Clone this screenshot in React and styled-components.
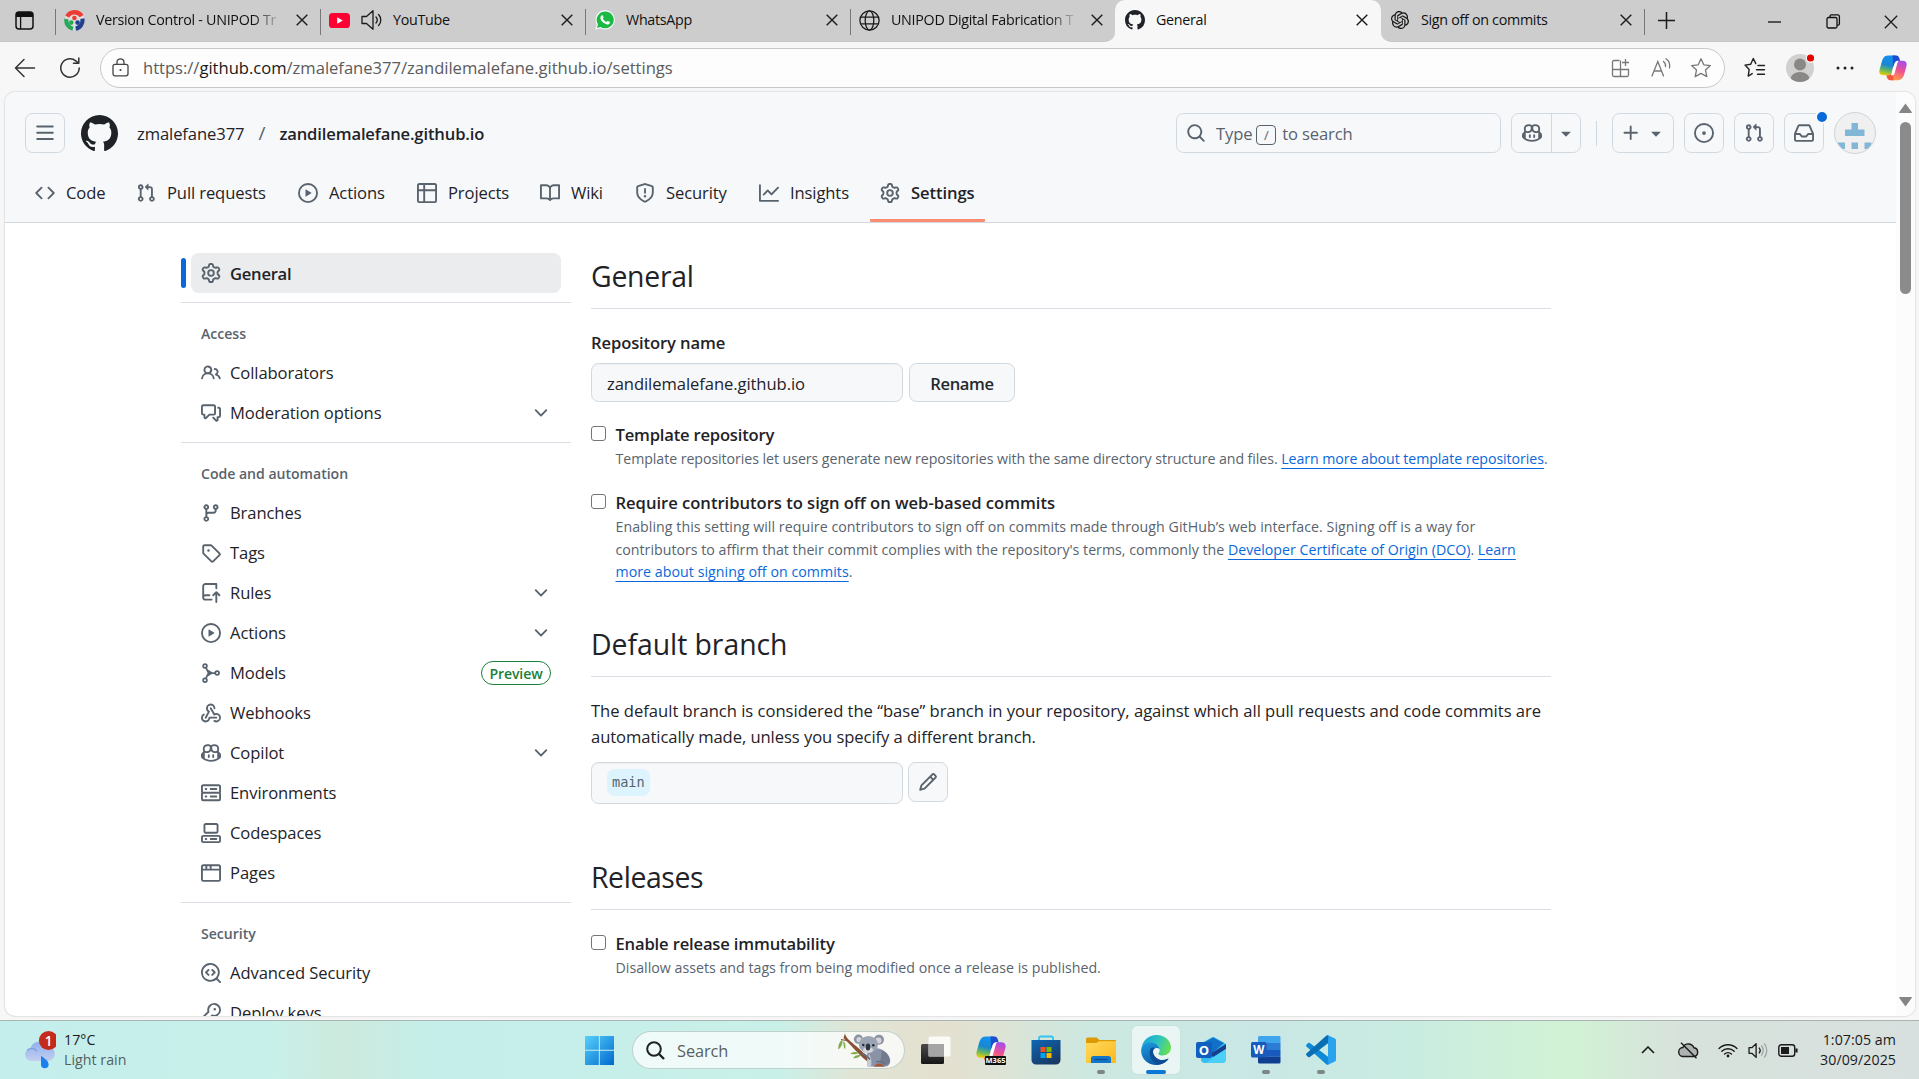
import React from 'react';
import styled, { createGlobalStyle, css } from 'styled-components';

const Global = createGlobalStyle`
  *, *::before, *::after { box-sizing: border-box; }
  html, body { margin: 0; height: 1079px; overflow: hidden; }
  body {
    font-family: "Open Sans", "Noto Sans", sans-serif;
    color: #1f2328;
    background: #f7f7f7;
  }
  svg { display: block; flex: none; }
`;

/* ---------- Octicon glyphs on a 16px grid ---------- */
const PATHS = {
  mark: 'M8 0c4.42 0 8 3.58 8 8a8.013 8.013 0 0 1-5.45 7.59c-.4.08-.55-.17-.55-.38 0-.27.01-1.13.01-2.2 0-.75-.25-1.23-.54-1.48 1.78-.2 3.65-.88 3.65-3.95 0-.88-.31-1.59-.82-2.15.08-.2.36-1.02-.08-2.12 0 0-.67-.22-2.2.82-.64-.18-1.32-.27-2-.27-.68 0-1.36.09-2 .27-1.53-1.03-2.2-.82-2.2-.82-.44 1.1-.16 1.92-.08 2.12-.51.56-.82 1.28-.82 2.15 0 3.06 1.86 3.75 3.64 3.95-.23.2-.44.55-.51 1.07-.46.21-1.61.55-2.33-.66-.15-.24-.6-.83-1.23-.82-.67.01-.27.38.01.53.34.19.73.9.82 1.13.16.45.68 1.31 2.69.94 0 .67.01 1.3.01 1.49 0 .21-.15.45-.55.38A7.995 7.995 0 0 1 0 8c0-4.42 3.58-8 8-8Z',
  bars: 'M1 2.75A.75.75 0 0 1 1.75 2h12.5a.75.75 0 0 1 0 1.5H1.75A.75.75 0 0 1 1 2.75Zm0 5A.75.75 0 0 1 1.75 7h12.5a.75.75 0 0 1 0 1.5H1.75A.75.75 0 0 1 1 7.75ZM1.75 12h12.5a.75.75 0 0 1 0 1.5H1.75a.75.75 0 0 1 0-1.5Z',
  code: 'm11.28 3.22 4.25 4.25a.75.75 0 0 1 0 1.06l-4.25 4.25a.749.749 0 0 1-1.275-.326.749.749 0 0 1 .215-.734L13.94 8l-3.72-3.72a.749.749 0 0 1 .326-1.275.749.749 0 0 1 .734.215Zm-6.56 0a.751.751 0 0 1 1.042.018.751.751 0 0 1 .018 1.042L2.06 8l3.72 3.72a.749.749 0 0 1-.326 1.275.749.749 0 0 1-.734-.215L.47 8.53a.75.75 0 0 1 0-1.06Z',
  pull: 'M1.5 3.25a2.25 2.25 0 1 1 3 2.122v5.256a2.251 2.251 0 1 1-1.5 0V5.372A2.25 2.25 0 0 1 1.5 3.25Zm5.677-.177L9.573.677A.25.25 0 0 1 10 .854V2.5h1A2.5 2.5 0 0 1 13.5 5v5.628a2.251 2.251 0 1 1-1.5 0V5a1 1 0 0 0-1-1h-1v1.646a.25.25 0 0 1-.427.177L7.177 3.427a.25.25 0 0 1 0-.354ZM3.75 2.5a.75.75 0 1 0 0 1.5.75.75 0 0 0 0-1.5Zm0 9.5a.75.75 0 1 0 0 1.5.75.75 0 0 0 0-1.5Zm8.25.75a.75.75 0 1 0 1.5 0 .75.75 0 0 0-1.5 0Z',
  play: 'M8 0a8 8 0 1 1 0 16A8 8 0 0 1 8 0ZM1.5 8a6.5 6.5 0 1 0 13 0 6.5 6.5 0 0 0-13 0Zm4.879-2.773 4.264 2.559a.25.25 0 0 1 0 .428l-4.264 2.559A.25.25 0 0 1 6 10.559V5.442a.25.25 0 0 1 .379-.215Z',
  table: 'M0 1.75C0 .784.784 0 1.75 0h12.5C15.216 0 16 .784 16 1.75v12.5A1.75 1.75 0 0 1 14.25 16H1.75A1.75 1.75 0 0 1 0 14.25ZM6.5 6.5v8h7.75a.25.25 0 0 0 .25-.25V6.5Zm8-1.5V1.75a.25.25 0 0 0-.25-.25H6.5V5Zm-13 1.5v7.75c0 .138.112.25.25.25H5v-8ZM5 5V1.5H1.75a.25.25 0 0 0-.25.25V5Z',
  book: 'M0 1.75A.75.75 0 0 1 .75 1h4.253c1.227 0 2.317.59 3 1.501A3.743 3.743 0 0 1 11.006 1h4.245a.75.75 0 0 1 .75.75v10.5a.75.75 0 0 1-.75.75h-4.507a2.25 2.25 0 0 0-1.591.659l-.622.621a.75.75 0 0 1-1.06 0l-.622-.621A2.25 2.25 0 0 0 5.258 13H.75a.75.75 0 0 1-.75-.75Zm7.251 10.324.004-5.073-.002-2.253A2.25 2.25 0 0 0 5.003 2.5H1.5v9h3.757a3.75 3.75 0 0 1 1.994.574ZM8.755 4.75l-.004 7.322a3.752 3.752 0 0 1 1.992-.572H14.5v-9h-3.495a2.25 2.25 0 0 0-2.25 2.25Z',
  shield: 'M7.467.133a1.748 1.748 0 0 1 1.066 0l5.25 1.68A1.75 1.75 0 0 1 15 3.48V7c0 1.566-.32 3.182-1.303 4.682-.983 1.498-2.585 2.813-5.032 3.855a1.697 1.697 0 0 1-1.33 0c-2.447-1.042-4.049-2.357-5.032-3.855C1.32 10.182 1 8.566 1 7V3.48a1.75 1.75 0 0 1 1.217-1.667Zm.61 1.429a.25.25 0 0 0-.153 0l-5.25 1.68a.25.25 0 0 0-.174.238V7c0 1.358.275 2.666 1.057 3.86.784 1.194 2.121 2.34 4.366 3.297a.196.196 0 0 0 .154 0c2.245-.956 3.582-2.104 4.366-3.298C13.225 9.666 13.5 8.36 13.5 7V3.48a.251.251 0 0 0-.174-.237l-5.25-1.68ZM8.75 4.75v3a.75.75 0 0 1-1.5 0v-3a.75.75 0 0 1 1.5 0ZM9 10.5a1 1 0 1 1-2 0 1 1 0 0 1 2 0Z',
  graph: 'M1.5 1.75V13.5h13.75a.75.75 0 0 1 0 1.5H.75a.75.75 0 0 1-.75-.75V1.75a.75.75 0 0 1 1.5 0Zm14.28 2.53-5.25 5.25a.75.75 0 0 1-1.06 0L7 7.06 4.28 9.78a.751.751 0 0 1-1.042-.018.751.751 0 0 1-.018-1.042l3.25-3.25a.75.75 0 0 1 1.06 0L10 7.94l4.72-4.72a.751.751 0 0 1 1.042.018.751.751 0 0 1 .018 1.042Z',
  gear: 'M8 0a8.2 8.2 0 0 1 .701.031C9.444.095 9.99.645 10.16 1.29l.288 1.107c.018.066.079.158.212.224.231.114.454.243.668.386.123.082.233.09.299.071l1.103-.303c.644-.176 1.392.021 1.82.63.27.385.506.792.704 1.218.315.675.111 1.422-.364 1.891l-.814.806c-.049.048-.098.147-.088.294.016.257.016.515 0 .772-.01.147.038.246.088.294l.814.806c.475.469.679 1.216.364 1.891a7.977 7.977 0 0 1-.704 1.217c-.428.61-1.176.807-1.82.63l-1.102-.302c-.067-.019-.177-.011-.3.071a5.909 5.909 0 0 1-.668.386c-.133.066-.194.158-.211.224l-.29 1.106c-.168.646-.715 1.196-1.458 1.26a8.006 8.006 0 0 1-1.402 0c-.743-.064-1.289-.614-1.458-1.26l-.289-1.106c-.018-.066-.079-.158-.212-.224a5.738 5.738 0 0 1-.668-.386c-.123-.082-.233-.09-.299-.071l-1.103.303c-.644.176-1.392-.021-1.82-.63a8.12 8.12 0 0 1-.704-1.218c-.315-.675-.111-1.422.363-1.891l.815-.806c.05-.048.098-.147.088-.294a6.214 6.214 0 0 1 0-.772c.01-.147-.038-.246-.088-.294l-.815-.806C.635 6.045.431 5.298.746 4.623a7.92 7.92 0 0 1 .704-1.217c.428-.61 1.176-.807 1.82-.63l1.102.302c.067.019.177.011.3-.071.214-.143.437-.272.668-.386.133-.066.194-.158.211-.224l.29-1.106C6.009.645 6.556.095 7.299.03 7.53.01 7.764 0 8 0Zm-.571 1.525c-.036.003-.108.036-.137.146l-.289 1.105c-.147.561-.549.967-.998 1.189-.173.086-.34.183-.5.29-.417.278-.97.423-1.529.27l-1.103-.303c-.109-.03-.175.016-.195.045-.22.312-.412.644-.573.99-.014.031-.021.11.059.19l.815.806c.411.406.562.957.53 1.456a4.709 4.709 0 0 0 0 .582c.032.499-.119 1.05-.53 1.456l-.815.806c-.081.08-.073.159-.059.19.162.346.353.677.573.989.02.03.085.076.195.046l1.102-.303c.56-.153 1.113-.008 1.53.27.161.107.328.204.501.29.447.222.85.629.997 1.189l.289 1.105c.029.109.101.143.137.146a6.6 6.6 0 0 0 1.142 0c.036-.003.108-.036.137-.146l.289-1.105c.147-.561.549-.967.998-1.189.173-.086.34-.183.5-.29.417-.278.97-.423 1.529-.27l1.103.303c.109.029.175-.016.195-.045.22-.313.411-.644.573-.99.014-.031.021-.11-.059-.19l-.815-.806c-.411-.406-.562-.957-.53-1.456a4.709 4.709 0 0 0 0-.582c-.032-.499.119-1.05.53-1.456l.815-.806c.081-.08.073-.159.059-.19a6.464 6.464 0 0 0-.573-.989c-.02-.03-.085-.076-.195-.046l-1.102.303c-.56.153-1.113.008-1.53-.27a4.44 4.44 0 0 0-.501-.29c-.447-.222-.85-.629-.997-1.189l-.289-1.105c-.029-.11-.101-.143-.137-.146a6.6 6.6 0 0 0-1.142 0ZM11 8a3 3 0 1 1-6 0 3 3 0 0 1 6 0ZM9.5 8a1.5 1.5 0 1 0-3.001.001A1.5 1.5 0 0 0 9.5 8Z',
  people: 'M2 5.5a3.5 3.5 0 1 1 5.898 2.549 5.508 5.508 0 0 1 3.034 4.084.75.75 0 1 1-1.482.235 4 4 0 0 0-7.9 0 .75.75 0 0 1-1.482-.236A5.507 5.507 0 0 1 3.102 8.05 3.493 3.493 0 0 1 2 5.5ZM11 4a3.001 3.001 0 0 1 2.22 5.018 5.01 5.01 0 0 1 2.56 3.012.749.749 0 0 1-.885.954.752.752 0 0 1-.549-.514 3.507 3.507 0 0 0-2.522-2.372.75.75 0 0 1-.574-.73v-.352a.75.75 0 0 1 .416-.672A1.5 1.5 0 0 0 11 5.5.75.75 0 0 1 11 4Zm-5.5-.5a2 2 0 1 0-.001 3.999A2 2 0 0 0 5.5 3.5Z',
  discussion: 'M1.75 1h8.5c.966 0 1.75.784 1.75 1.75v5.5A1.75 1.75 0 0 1 10.25 10H7.061l-2.574 2.573A1.458 1.458 0 0 1 2 11.543V10h-.25A1.75 1.75 0 0 1 0 8.25v-5.5C0 1.784.784 1 1.75 1ZM1.5 2.75v5.5c0 .138.112.25.25.25h1a.75.75 0 0 1 .75.75v2.19l2.72-2.72a.749.749 0 0 1 .53-.22h3.5a.25.25 0 0 0 .25-.25v-5.5a.25.25 0 0 0-.25-.25h-8.5a.25.25 0 0 0-.25.25Zm13 2a.25.25 0 0 0-.25-.25h-.5a.75.75 0 0 1 0-1.5h.5c.966 0 1.75.784 1.75 1.75v5.5A1.75 1.75 0 0 1 14.25 12H14v1.543a1.458 1.458 0 0 1-2.487 1.03L9.22 12.28a.749.749 0 0 1 .326-1.275.749.749 0 0 1 .734.215l2.22 2.22v-2.19a.75.75 0 0 1 .75-.75h1a.25.25 0 0 0 .25-.25Z',
  branch: 'M9.5 3.25a2.25 2.25 0 1 1 3 2.122V6A2.5 2.5 0 0 1 10 8.5H6a1 1 0 0 0-1 1v1.128a2.251 2.251 0 1 1-1.5 0V5.372a2.25 2.25 0 1 1 1.5 0v1.836A2.493 2.493 0 0 1 6 7h4a1 1 0 0 0 1-1v-.628A2.25 2.25 0 0 1 9.5 3.25Zm-6 0a.75.75 0 1 0 1.5 0 .75.75 0 0 0-1.5 0Zm8.25-.75a.75.75 0 1 0 0 1.5.75.75 0 0 0 0-1.5ZM4.25 12a.75.75 0 1 0 0 1.5.75.75 0 0 0 0-1.5Z',
  tag: 'M1 7.775V2.75C1 1.784 1.784 1 2.75 1h5.025c.464 0 .91.184 1.238.513l6.25 6.25a1.75 1.75 0 0 1 0 2.474l-5.026 5.026a1.75 1.75 0 0 1-2.474 0l-6.25-6.25A1.752 1.752 0 0 1 1 7.775Zm1.5 0c0 .066.026.13.073.177l6.25 6.25a.25.25 0 0 0 .354 0l5.025-5.025a.25.25 0 0 0 0-.354l-6.25-6.25a.25.25 0 0 0-.177-.073H2.75a.25.25 0 0 0-.25.25ZM6 5a1 1 0 1 1 0 2 1 1 0 0 1 0-2Z',
  webhook: 'M5.5 4.25a2.25 2.25 0 0 1 4.5 0 .75.75 0 0 0 1.5 0 3.75 3.75 0 1 0-6.14 2.889l-2.272 4.258a.75.75 0 0 0 1.324.706L7 7.25a.75.75 0 0 0-.309-1.015A2.25 2.25 0 0 1 5.5 4.25ZM7.364 3.607a.75.75 0 0 1 1.03.257l2.608 4.349a3.75 3.75 0 1 1-.628 6.785.75.75 0 0 1 .752-1.299 2.25 2.25 0 1 0-.033-3.88.75.75 0 0 1-1.03-.256L7.107 4.636a.75.75 0 0 1 .257-1.03ZM2.9 8.776A.75.75 0 0 1 2.625 9.8 2.25 2.25 0 1 0 6 11.75a.75.75 0 0 1 .75-.751h5.5a.75.75 0 0 1 0 1.5H7.425a3.751 3.751 0 1 1-5.55-3.998.75.75 0 0 1 1.024.274Z',
  copilot: 'M7.998 15.035c-4.562 0-7.873-2.914-7.998-3.749V9.338c.085-.628.677-1.686 1.588-2.065.013-.07.024-.143.036-.218.029-.183.06-.384.126-.612-.201-.508-.254-1.084-.254-1.656 0-.87.128-1.769.693-2.484.579-.733 1.494-1.124 2.724-1.261 1.206-.134 2.262.034 2.944.765.05.053.096.108.139.165.044-.057.094-.112.143-.165.682-.731 1.738-.899 2.944-.765 1.23.137 2.145.528 2.724 1.261.566.715.693 1.614.693 2.484 0 .572-.053 1.148-.254 1.656.066.228.098.429.126.612.012.076.024.148.037.218.924.385 1.522 1.471 1.591 2.095v1.872c0 .766-3.351 3.795-8.002 3.795Zm0-1.485c2.28 0 4.584-1.11 5.002-1.433V7.862l-.023-.116c-.49.21-1.075.291-1.727.291-1.146 0-2.059-.327-2.71-.991A3.222 3.222 0 0 1 8 6.303a3.24 3.24 0 0 1-.544.743c-.65.664-1.563.991-2.71.991-.652 0-1.236-.081-1.727-.291l-.023.116v4.255c.419.323 2.722 1.433 5.002 1.433ZM6.762 2.83c-.193-.206-.637-.413-1.682-.297-1.019.113-1.479.404-1.713.7-.247.312-.369.789-.369 1.554 0 .793.129 1.171.308 1.371.162.181.519.379 1.442.379.853 0 1.339-.235 1.638-.54.315-.322.527-.827.617-1.553.117-.935-.037-1.395-.241-1.614Zm4.155-.297c-1.044-.116-1.488.091-1.681.297-.204.219-.359.679-.242 1.614.091.726.303 1.231.618 1.553.299.305.784.54 1.638.54.922 0 1.28-.198 1.442-.379.179-.2.308-.578.308-1.371 0-.765-.123-1.242-.37-1.554-.233-.296-.693-.587-1.713-.7ZM6.25 9.037a.75.75 0 0 1 .75.75v1.501a.75.75 0 0 1-1.5 0V9.787a.75.75 0 0 1 .75-.75Zm4.25.75v1.501a.75.75 0 0 1-1.5 0V9.787a.75.75 0 0 1 1.5 0Z',
  server: 'M1.75 1h12.5c.966 0 1.75.784 1.75 1.75v4c0 .372-.116.717-.314 1 .198.283.314.628.314 1v4a1.75 1.75 0 0 1-1.75 1.75H1.75A1.75 1.75 0 0 1 0 12.75v-4c0-.358.109-.707.314-1a1.739 1.739 0 0 1-.314-1v-4C0 1.784.784 1 1.75 1ZM1.5 2.75v4c0 .138.112.25.25.25h12.5a.25.25 0 0 0 .25-.25v-4a.25.25 0 0 0-.25-.25H1.75a.25.25 0 0 0-.25.25Zm.25 5.75a.25.25 0 0 0-.25.25v4c0 .138.112.25.25.25h12.5a.25.25 0 0 0 .25-.25v-4a.25.25 0 0 0-.25-.25ZM7 4.75A.75.75 0 0 1 7.75 4h4.5a.75.75 0 0 1 0 1.5h-4.5A.75.75 0 0 1 7 4.75ZM7.75 10h4.5a.75.75 0 0 1 0 1.5h-4.5a.75.75 0 0 1 0-1.5ZM3 4.75A.75.75 0 0 1 3.75 4h.5a.75.75 0 0 1 0 1.5h-.5A.75.75 0 0 1 3 4.75ZM3.75 10h.5a.75.75 0 0 1 0 1.5h-.5a.75.75 0 0 1 0-1.5Z',
  codespaces: 'M0 11.25c0-.966.784-1.75 1.75-1.75h12.5c.966 0 1.75.784 1.75 1.75v3A1.75 1.75 0 0 1 14.25 16H1.75A1.75 1.75 0 0 1 0 14.25Zm2-9.5C2 .784 2.784 0 3.75 0h8.5C13.216 0 14 .784 14 1.75v5a1.75 1.75 0 0 1-1.75 1.75h-8.5A1.75 1.75 0 0 1 2 6.75Zm1.75-.25a.25.25 0 0 0-.25.25v5c0 .138.112.25.25.25h8.5a.25.25 0 0 0 .25-.25v-5a.25.25 0 0 0-.25-.25Zm-2 9.5a.25.25 0 0 0-.25.25v3c0 .138.112.25.25.25h12.5a.25.25 0 0 0 .25-.25v-3a.25.25 0 0 0-.25-.25ZM7 12.75a.75.75 0 0 1 .75-.75h4.5a.75.75 0 0 1 0 1.5h-4.5a.75.75 0 0 1-.75-.75Zm-4 0a.75.75 0 0 1 .75-.75h.5a.75.75 0 0 1 0 1.5h-.5a.75.75 0 0 1-.75-.75Z',
  browser: 'M0 2.75C0 1.784.784 1 1.75 1h12.5c.966 0 1.75.784 1.75 1.75v10.5A1.75 1.75 0 0 1 14.25 15H1.75A1.75 1.75 0 0 1 0 13.25ZM14.5 6h-13v7.25c0 .138.112.25.25.25h12.5a.25.25 0 0 0 .25-.25Zm-6-3.5v2h6V2.75a.25.25 0 0 0-.25-.25ZM5 2.5v2h2v-2Zm-3.25 0a.25.25 0 0 0-.25.25V4.5h2v-2Z',
  codescan: 'M8.47 4.97a.75.75 0 0 0 0 1.06L9.94 7.5 8.47 8.97a.75.75 0 1 0 1.06 1.06l2-2a.75.75 0 0 0 0-1.06l-2-2a.75.75 0 0 0-1.06 0ZM6.53 6.03a.75.75 0 0 0-1.06-1.06l-2 2a.75.75 0 0 0 0 1.06l2 2a.75.75 0 1 0 1.06-1.06L5.06 7.5l1.47-1.47ZM12.246 13.307a7.501 7.501 0 1 1 1.06-1.06l2.474 2.473a.749.749 0 1 1-1.06 1.06l-2.474-2.473ZM1.5 7.5a6.002 6.002 0 0 0 3.608 5.504 6.002 6.002 0 0 0 6.486-1.117.748.748 0 0 1 .292-.293A6 6 0 1 0 1.5 7.5Z',
  key: 'M10.5 0a5.499 5.499 0 1 1-1.288 10.848l-.932.932a.749.749 0 0 1-.53.22H7v.75a.749.749 0 0 1-.22.53l-.5.5a.749.749 0 0 1-.53.22H5v.75a.749.749 0 0 1-.22.53l-.5.5a.749.749 0 0 1-.53.22h-2A1.75 1.75 0 0 1 0 14.25v-2c0-.199.079-.389.22-.53l4.932-4.932A5.5 5.5 0 0 1 10.5 0Zm-4 5.5c-.001.431.069.86.205 1.269a.75.75 0 0 1-.181.768L1.5 12.56v1.69c0 .138.112.25.25.25h1.69l.06-.06v-1.19a.75.75 0 0 1 .75-.75h1.19l.06-.06v-1.19a.75.75 0 0 1 .75-.75h1.19l1.023-1.025a.75.75 0 0 1 .768-.18A4 4 0 1 0 6.5 5.5ZM11 6a1 1 0 1 1 0-2 1 1 0 0 1 0 2Z',
  pencil: 'M11.013 1.427a1.75 1.75 0 0 1 2.474 0l1.086 1.086a1.75 1.75 0 0 1 0 2.474l-8.61 8.61c-.21.21-.47.364-.756.445l-3.251.93a.75.75 0 0 1-.927-.928l.929-3.25c.081-.286.235-.547.445-.758l8.61-8.61Zm.176 4.823L9.75 4.81l-6.286 6.287a.253.253 0 0 0-.064.108l-.558 1.953 1.953-.558a.253.253 0 0 0 .108-.064Zm1.238-3.763a.25.25 0 0 0-.354 0L10.811 3.75l1.439 1.44 1.263-1.263a.25.25 0 0 0 0-.354Z',
  inbox: 'M2.8 2.06A1.75 1.75 0 0 1 4.41 1h7.18c.7 0 1.333.417 1.61 1.06l2.74 6.395c.04.093.06.194.06.295v4.5A1.75 1.75 0 0 1 14.25 15H1.75A1.75 1.75 0 0 1 0 13.25v-4.5c0-.101.02-.202.06-.295Zm1.61.44a.25.25 0 0 0-.23.152L1.887 8H4.75a.75.75 0 0 1 .6.3L6.625 10h2.75l1.275-1.7a.75.75 0 0 1 .6-.3h2.863L11.82 2.652a.25.25 0 0 0-.23-.152Zm10.09 7h-2.875l-1.275 1.7a.75.75 0 0 1-.6.3h-3.5a.75.75 0 0 1-.6-.3L4.375 9.5H1.5v3.75c0 .138.112.25.25.25h12.5a.25.25 0 0 0 .25-.25Z',
  issue: 'M8 9.5a1.5 1.5 0 1 0 0-3 1.5 1.5 0 0 0 0 3ZM8 0a8 8 0 1 1 0 16A8 8 0 0 1 8 0ZM1.5 8a6.5 6.5 0 1 0 13 0 6.5 6.5 0 0 0-13 0Z',
  chevron: 'M12.78 5.22a.749.749 0 0 1 0 1.06l-4.25 4.25a.749.749 0 0 1-1.06 0L3.22 6.28a.749.749 0 1 1 1.06-1.06L8 8.939l3.72-3.719a.749.749 0 0 1 1.06 0Z',
  triangle: 'm4.427 7.427 3.396 3.396a.25.25 0 0 0 .354 0l3.396-3.396A.25.25 0 0 0 11.396 7H4.604a.25.25 0 0 0-.177.427Z',
  plus: 'M7.75 2a.75.75 0 0 1 .75.75V7h4.25a.75.75 0 0 1 0 1.5H8.5v4.25a.75.75 0 0 1-1.5 0V8.5H2.75a.75.75 0 0 1 0-1.5H7V2.75A.75.75 0 0 1 7.75 2Z',
  search: 'M10.68 11.74a6 6 0 0 1-7.922-8.982 6 6 0 0 1 8.982 7.922l3.04 3.04a.749.749 0 0 1-.326 1.275.749.749 0 0 1-.734-.215ZM11.5 7a4.499 4.499 0 1 0-8.997 0A4.499 4.499 0 0 0 11.5 7Z',
};

function Octicon({ name, size = 20, color = '#59636e' }) {
  if (name === 'rules') {
    return (
      <svg width={size} height={size} viewBox="0 0 16 16" fill="none" stroke={color} strokeWidth="1.5" strokeLinecap="round" strokeLinejoin="round">
        <path d="M12.25 4.25V.75H3.5A1.75 1.75 0 0 0 1.75 2.5v9M6.75 9.75H3.5a1.75 1.75 0 0 0 0 3.5h5M12.25 15.2V7.6M9.75 9.8l2.5-2.5 2.5 2.5" />
      </svg>
    );
  }
  if (name === 'models') {
    return (
      <svg width={size} height={size} viewBox="0 0 16 16" fill="none" stroke={color} strokeWidth="1.4">
        <circle cx="3.2" cy="2.3" r="1.5" />
        <circle cx="3.2" cy="13.7" r="1.5" />
        <circle cx="12.9" cy="8" r="1.5" />
        <path d="M3.9 3.7 6.1 8l-2.2 4.3M6.2 8h5.2M5 5.9l3.6 2.1L5 10.1" />
      </svg>
    );
  }
  return (
    <svg width={size} height={size} viewBox="0 0 16 16" fill={color}>
      <path d={PATHS[name]} />
    </svg>
  );
}

/* ---------- Browser chrome ---------- */
const Screen = styled.div`
  width: 1919px;
  height: 1079px;
  display: flex;
  flex-direction: column;
  overflow: hidden;
  background: #f7f7f7;
`;

const TabStrip = styled.div`
  height: 42px;
  flex: none;
  display: flex;
  background: #f7f7f7;
`;

const StripPart = styled.div`
  display: flex;
  height: 42px;
  background: #cdcdcd;
  border-bottom: 1px solid #c9c9c9;
  ${(p) => p.$side === 'left' && css`width: 1115px; border-bottom-right-radius: 10px;`}
  ${(p) => p.$side === 'right' && css`flex: 1; border-bottom-left-radius: 10px;`}
`;

const WorkspaceButton = styled.div`
  width: 55px;
  padding: 11px 0 0 15px;
`;

const Tab = styled.div`
  width: ${(p) => p.$w || 265}px;
  height: 40px;
  display: flex;
  align-items: center;
  padding-left: ${(p) => p.$pad || 8}px;
  position: relative;
  border-left: 1px solid transparent;
  &::before {
    content: '';
    position: absolute;
    left: -1px;
    top: 9px;
    width: 1px;
    height: 26px;
    background: ${(p) => (p.$divider ? '#777' : 'transparent')};
  }
`;

const ActiveTabWrap = styled.div`
  width: 266px;
  height: 42px;
  background: linear-gradient(#cdcdcd 0 20px, #f7f7f7 20px);
`;

const ActiveTab = styled.div`
  height: 42px;
  border-radius: 10px 10px 0 0;
  background: #f7f7f7;
`;

const Favicon = styled.div`
  width: 21px;
  height: 21px;
  display: flex;
  align-items: center;
  justify-content: center;
  flex: none;
`;

const TabTitle = styled.div`
  flex: 1;
  margin-left: 11px;
  overflow: hidden;
  white-space: nowrap;
  font-size: 14.3px;
  letter-spacing: -0.3px;
  line-height: 20px;
  color: #111;
  ${(p) => p.$fade && css`mask-image: linear-gradient(90deg, #000 84%, transparent 100%);`}
`;

const TabClose = styled.div`
  width: 37px;
  display: flex;
  justify-content: center;
  flex: none;
`;

const StripTools = styled.div`
  flex: 1;
  display: flex;
  align-items: center;
  position: relative;
  border-left: 1px solid transparent;
  padding-left: 13px;
  &::before {
    content: '';
    position: absolute;
    left: -1px;
    top: 9px;
    width: 1px;
    height: 26px;
    background: #777;
  }
`;

const WindowButtons = styled.div`
  margin-left: auto;
  display: flex;
  align-items: center;
  gap: 43.5px;
  padding: 2px 21px 0 0;
`;

const AddressRow = styled.div`
  height: 50px;
  flex: none;
  display: flex;
  align-items: center;
  padding: 1px 0 0 14px;
`;

const NavIcon = styled.div`
  width: 22px;
  margin-right: ${(p) => p.$gap}px;
  flex: none;
`;

const AddressBar = styled.div`
  width: 1625px;
  height: 40px;
  flex: none;
  border: 1px solid #c8c8c8;
  border-radius: 20px;
  background: #fdfdfd;
  display: flex;
  align-items: center;
  padding: 0 12px 0 11px;
`;

const Url = styled.div`
  margin-left: 14px;
  font-size: 16.6px;
  letter-spacing: -0.02px;
  line-height: 24px;
  color: #5b5b5b;
  flex: 1;
  b { font-weight: 400; color: #191919; }
`;

const UrlActions = styled.div`
  display: flex;
  gap: 18px;
`;

const BrowserActions = styled.div`
  margin-left: 7px;
  display: grid;
  grid-template-columns: 45px 45px 46px 50px;
  align-items: center;
  justify-items: center;
`;

/* ---------- Page frame ---------- */
const PageFrame = styled.div`
  margin: 0 4px 0 5px;
  height: 924px;
  flex: none;
  display: flex;
  border-radius: 10px;
  overflow: hidden;
  background: #fff;
  box-shadow: 0 0 2px rgba(0, 0, 0, 0.28);
`;

const Page = styled.div`
  width: 1891px;
  height: 924px;
  overflow: hidden;
`;

const Scrollbar = styled.div`
  width: 19px;
  background: #fcfcfc;
  display: flex;
  flex-direction: column;
  align-items: center;
  padding: 11px 1px 9px 0;
`;

const Thumb = styled.div`
  width: 11px;
  height: 172px;
  margin: 9px 0 auto;
  border-radius: 6px;
  background: #8b8b8b;
`;

const Header = styled.header`
  height: 131px;
  background: #f6f8fa;
  border-bottom: 1px solid #d1d9e0;
`;

const TopBar = styled.div`
  height: 81px;
  padding: 1px 20px 0 20px;
  display: flex;
  align-items: center;
`;

const IconButton = styled.div`
  width: ${(p) => p.$w || 40}px;
  height: 40px;
  flex: none;
  border: 1px solid #d1d9e0;
  border-radius: 7.5px;
  display: flex;
  align-items: center;
  justify-content: center;
  gap: 5px;
  position: relative;
  background: #f6f8fa;
`;

const Logo = styled.div`
  margin-left: 16px;
`;

const Crumbs = styled.div`
  margin-left: 19px;
  display: flex;
  align-items: center;
  font-size: 16.6px;
  letter-spacing: -0.1px;
  span { color: #59636e; width: 35px; text-align: center; font-size: 19px; }
  b { font-weight: 600; letter-spacing: -0.14px; }
`;

const SearchBox = styled.div`
  margin-left: auto;
  width: 325px;
  height: 40px;
  border: 1px solid #d1d9e0;
  border-radius: 7.5px;
  display: flex;
  align-items: center;
  padding-left: 9px;
  font-size: 16.6px;
  letter-spacing: -0.15px;
  color: #59636e;
  svg { margin-right: 10px; }
`;

const Kbd = styled.span`
  width: 20px;
  height: 20px;
  margin: 3px 6px 0 4px;
  border: 1px solid #59636e;
  border-radius: 4px;
  font-size: 13px;
  line-height: 18px;
  text-align: center;
`;

const SplitButton = styled(IconButton)`
  margin-left: 10px;
  width: 70px;
  gap: 0;
  justify-content: flex-start;
`;

const SplitHalf = styled.div`
  width: ${(p) => p.$w}px;
  height: 38px;
  display: flex;
  align-items: center;
  justify-content: center;
  ${(p) => p.$line && css`border-right: 1px solid #d1d9e0;`}
`;

const VLine = styled.div`
  width: 1px;
  height: 25px;
  margin: 0 15px;
  background: #d1d9e0;
`;

const HeaderButtons = styled.div`
  display: flex;
  gap: 10px;
`;

const UnreadDot = styled.i`
  position: absolute;
  top: -4px;
  right: -6px;
  width: 14px;
  height: 14px;
  border-radius: 50%;
  border: 2px solid #f6f8fa;
  background: #0969da;
`;

const Avatar = styled.div`
  width: 42px;
  height: 42px;
  margin-top: -1px;
  border-radius: 50%;
  overflow: hidden;
  border: 1px solid #cfd4d9;
  background: #f0f0f0;
`;

const RepoNav = styled.nav`
  height: 49px;
  padding-left: 20px;
  display: flex;
  gap: 10px;
`;

const RepoTab = styled.div`
  width: ${(p) => p.$w}px;
  padding: 0 0 7px 10px;
  display: flex;
  align-items: center;
  gap: 11px;
  white-space: nowrap;
  font-size: 16.6px;
  letter-spacing: -0.12px;
  border-bottom: 3px solid transparent;
  ${(p) => p.$active && css`font-weight: 600; letter-spacing: -0.1px; border-color: #fd8c73; border-radius: 1px;`}
`;

/* ---------- Settings ---------- */
const Settings = styled.div`
  padding: 30px 0 0 176px;
  display: flex;
  gap: 20px;
`;

const Sidebar = styled.aside`
  width: 390px;
  flex: none;
`;

const NavRow = styled.div`
  height: 40px;
  margin: 0 10px;
  padding: 0 10px;
  border-radius: 7.5px;
  display: flex;
  align-items: center;
  gap: 9px;
  position: relative;
  font-size: 16.6px;
  letter-spacing: -0.1px;
  > svg:last-child { margin-left: auto; }
  ${(p) => p.$active && css`
    background: #ebecee;
    font-weight: 600;
    letter-spacing: -0.25px;
    &::before {
      content: '';
      position: absolute;
      left: -10px;
      top: 5px;
      width: 5px;
      height: 30px;
      border-radius: 4px;
      background: #0969da;
    }
  `}
`;

const NavLabel = styled.span`
  margin-top: ${(p) => (p.$lift ? -2 : 0)}px;
`;

const NavHeading = styled.div`
  margin-top: 9px;
  border-top: 1px solid #d9dfe5;
  height: 51px;
  padding: 19px 0 0 20px;
  font-size: 14.1px;
  font-weight: 600;
  letter-spacing: -0.03px;
  line-height: 24px;
  color: #59636e;
`;

const Badge = styled.span`
  margin-left: auto;
  width: 70px;
  height: 24px;
  border: 1px solid #1a7f37;
  border-radius: 12px;
  color: #1a7f37;
  text-align: center;
  font-size: 14.1px;
  font-weight: 600;
  line-height: 23px;
  letter-spacing: -0.1px;
`;

const Main = styled.main`
  width: 960px;
`;

const Title = styled.h2`
  margin: ${(p) => p.$mt || 0}px 0 0;
  padding-bottom: 9px;
  border-bottom: 1px solid #d9dfe5;
  font-size: 28.4px;
  font-weight: 400;
  line-height: 46px;
  letter-spacing: ${(p) => p.$ls || 0}px;
`;

const FieldLabel = styled.div`
  margin: 21px 0 7px;
  font-size: 16.6px;
  font-weight: 600;
  line-height: 26px;
  letter-spacing: -0.12px;
`;

const FieldRow = styled.div`
  display: flex;
  align-items: flex-start;
  gap: ${(p) => p.$gap}px;
`;

const Field = styled.div`
  width: 312px;
  height: ${(p) => p.$h}px;
  padding: 1px 15px 0;
  border: 1px solid #d1d9e0;
  border-radius: 7.5px;
  background: #f6f8fa;
  box-shadow: inset 0 1px 0 rgba(31, 35, 40, 0.04);
  display: flex;
  align-items: center;
  font-size: 16.6px;
  letter-spacing: -0.08px;
`;

const Button = styled.div`
  width: 106px;
  height: 39px;
  padding-top: 1px;
  border: 1px solid #d1d9e0;
  border-radius: 7.5px;
  background: #f6f8fa;
  display: flex;
  align-items: center;
  justify-content: center;
  font-size: 16.6px;
  font-weight: 600;
  letter-spacing: -0.35px;
  color: #25292e;
`;

const BranchName = styled.span`
  height: 27px;
  padding: 0 5px;
  margin-top: -3px;
  border-radius: 7.5px;
  background: #ddf4ff;
  color: #59636e;
  font-family: "DejaVu Sans Mono", "Liberation Mono", monospace;
  font-size: 13.6px;
  letter-spacing: 0;
  line-height: 27px;
`;

const Option = styled.div`
  margin-top: ${(p) => p.$mt}px;
  display: flex;
  gap: 9.5px;
`;

const CheckBox = styled.div`
  width: 15px;
  height: 15px;
  margin-top: 4px;
  flex: none;
  border: 1px solid #767676;
  border-radius: 3px;
  background: #fff;
`;

const OptionTitle = styled.div`
  font-size: 16.6px;
  font-weight: 600;
  line-height: 25px;
  letter-spacing: ${(p) => p.$ls}px;
  white-space: nowrap;
`;

const OptionNote = styled.div`
  padding-top: 1px;
  margin-bottom: -1px;
  font-size: 14.2px;
  line-height: 22.5px;
  letter-spacing: ${(p) => p.$ls}px;
  color: #59636e;
  white-space: nowrap;
`;

const Link = styled.a`
  color: #0969da;
  text-decoration: underline;
  text-decoration-thickness: 1px;
  text-underline-offset: 4px;
  text-decoration-skip-ink: none;
`;

const Tight = styled.span`
  letter-spacing: ${(p) => p.$ls}px;
`;

const Paragraph = styled.p`
  margin: 20.5px 0 12px;
  font-size: 16.6px;
  line-height: 26.25px;
  letter-spacing: -0.02px;
  white-space: nowrap;
`;

/* ---------- Taskbar ---------- */
const Taskbar = styled.div`
  margin-top: 4px;
  height: 59px;
  flex: none;
  display: flex;
  align-items: center;
  border-top: 1px solid #a9b5b2;
  background: linear-gradient(90deg, #c4eeec 0, #c8f0ea 270px, #cdeadd 340px, #c5eeea 430px, #c6eeea 560px, #c9f0e8 780px, #dfe5d6 850px, #e5e0cf 940px, #dde4d6 1000px, #cce8e0 1090px, #c9e7e5 1260px, #c9ece2 1400px, #d1f2d4 1570px, #d8e2dc 1680px, #d7e0de 1919px);
`;

const Weather = styled.div`
  width: 584px;
  padding-left: 24px;
  display: flex;
  align-items: center;
  gap: 8px;
`;

const TwoLines = styled.div`
  font-size: 14.2px;
  line-height: 20px;
  letter-spacing: ${(p) => p.$ls}px;
  color: #1b1b1b;
  text-align: ${(p) => p.$align || 'left'};
  small { display: block; font-size: inherit; color: ${(p) => p.$sub || '#1b1b1b'}; }
`;

const StartButton = styled.div`
  width: 48px;
  display: flex;
`;

const TaskSearch = styled.div`
  width: 273px;
  height: 38px;
  border-radius: 19px;
  border: 1px solid rgba(150, 175, 165, 0.55);
  background: rgba(255, 255, 255, 0.72);
  display: flex;
  align-items: center;
  padding: 0 12px 0 13px;
  font-size: 16.4px;
  letter-spacing: -0.1px;
  color: #5a5f5e;
  span { margin-left: 12px; flex: 1; }
`;

const Apps = styled.div`
  margin-left: 7px;
  display: flex;
  gap: 7px;
`;

const AppCell = styled.div`
  width: 48px;
  height: 48px;
  border-radius: 5px;
  display: flex;
  align-items: center;
  justify-content: center;
  position: relative;
  ${(p) => p.$active && css`background: rgba(255, 255, 255, 0.6); box-shadow: 0 0 1px rgba(0, 0, 0, 0.2);`}
  &::after {
    content: '';
    position: absolute;
    bottom: 0;
    left: 50%;
    transform: translateX(-50%);
    height: 4px;
    border-radius: 2px;
    width: ${(p) => (p.$active ? 20 : p.$open ? 8 : 0)}px;
    background: ${(p) => (p.$active ? '#0a78d4' : '#7c8785')};
  }
`;

const Tray = styled.div`
  margin-left: auto;
  padding-right: 23px;
  display: flex;
  align-items: center;
`;

const TrayIcon = styled.div`
  width: ${(p) => p.$w}px;
  display: flex;
  justify-content: center;
`;

const ClockBox = styled.div`
  width: 90px;
`;

/* ---------- Small drawings ---------- */
const CloseX = ({ size = 12, w = 1.4 }) => (
  <svg width={size} height={size} viewBox="0 0 12 12" stroke="#1b1b1b" strokeWidth={w} fill="none"><path d="M.7.7l10.6 10.6M11.3.7.7 11.3" /></svg>
);

const WorkspaceIcon = () => (
  <svg width="19" height="19" viewBox="0 0 19 19"><rect x="1" y="1" width="17" height="17" rx="3" fill="none" stroke="#111" strokeWidth="1.5" /><path d="M1 4a3 3 0 0 1 3-3h11a3 3 0 0 1 3 3v2H1z" fill="#111" /><path d="M5.6 6v12" stroke="#111" strokeWidth="1.3" /></svg>
);

const FabFoundation = () => (
  <svg width="21" height="21" viewBox="0 0 21 21" fill="none">
    <circle cx="10.5" cy="10.5" r="10" fill="#dedede" />
    <path d="M3.2 6.6A8.300 8.300 0 0 1 17.600 6.200" stroke="#ef3b33" strokeWidth="4.400" />
    <path d="M18.300 8.600a8.300 8.300 0 0 1-6.600 10" stroke="#24418e" strokeWidth="4.200" />
    <path d="M2.500 9a8.300 8.300 0 0 0 6.400 9.700" stroke="#27a757" strokeWidth="4.200" />
    <circle cx="10.400" cy="8" r="2.300" fill="#ef3b33" /><circle cx="13.600" cy="12.600" r="2.300" fill="#24418e" /><circle cx="7.200" cy="12.600" r="2.300" fill="#27a757" />
  </svg>
);

const YouTube = () => (
  <svg width="21" height="15" viewBox="0 0 21 15"><rect width="21" height="15" rx="3.6" fill="#ff0033" /><path d="M8.2 4.3v6.4l5.6-3.2z" fill="#fff" /></svg>
);

const Speaker = () => (
  <svg width="21" height="20" viewBox="0 0 21 20" fill="none" stroke="#1b1b1b" strokeWidth="1.3" strokeLinejoin="round" strokeLinecap="round">
    <path d="M1 6.500h4.500L12 .8v18.400L5.500 13.500H1z" />
    <path d="M15 7a4.600 4.600 0 0 1 0 6M17.600 4.500a8 8 0 0 1 0 11" />
  </svg>
);

const WhatsApp = () => (
  <svg width="20" height="20" viewBox="0 0 20 20">
    <path d="M10.1.3a9.6 9.6 0 0 0-8.3 14.4L.4 19.6l5-1.3A9.6 9.6 0 1 0 10.1.3z" fill="#fff" />
    <path d="M10.1 1.5a8.4 8.4 0 0 0-7.2 12.8l-.9 3.6 3.7-1a8.4 8.4 0 1 0 4.4-15.4z" fill="#19b944" />
    <path d="M6.6 5.4c.5-.4 1-.3 1.2.2l.7 1.6c.1.3 0 .6-.8 1.4.8 1.6 2 2.7 3.7 3.4.9-1.1 1.1-1.2 1.5-1l1.7.8c.4.2.4.4.3.9-.3 1.4-1.8 1.9-2.9 1.7-3-.6-5.300-2.600-6.400-5.300-.500-1.400-.200-2.900 1-3.700z" fill="#fff" />
  </svg>
);

const Globe = () => (
  <svg width="21" height="21" viewBox="0 0 21 21" fill="none" stroke="#1b1b1b" strokeWidth="1.3"><circle cx="10.500" cy="10.500" r="9.600" /><ellipse cx="10.500" cy="10.500" rx="4.300" ry="9.600" /><path d="M1.700 7.200h17.600M1.700 13.800h17.600" /></svg>
);

const OpenAI = () => (
  <svg width="18" height="18" viewBox="0 0 24 24" fill="#111"><path d="M22.2819 9.8211a5.9847 5.9847 0 0 0-.5157-4.9108 6.0462 6.0462 0 0 0-6.5098-2.9A6.0651 6.0651 0 0 0 4.9807 4.1818a5.9847 5.9847 0 0 0-3.9977 2.9 6.0462 6.0462 0 0 0 .7427 7.0966 5.98 5.98 0 0 0 .511 4.9107 6.051 6.051 0 0 0 6.5146 2.9001A5.9847 5.9847 0 0 0 13.2599 24a6.0557 6.0557 0 0 0 5.7718-4.2058 5.9894 5.9894 0 0 0 3.9977-2.9001 6.0557 6.0557 0 0 0-.7475-7.0729zm-9.022 12.6081a4.4755 4.4755 0 0 1-2.8764-1.0408l.1419-.0804 4.7783-2.7582a.7948.7948 0 0 0 .3927-.6813v-6.7369l2.02 1.1686a.071.071 0 0 1 .038.052v5.5826a4.504 4.504 0 0 1-4.4945 4.4944zm-9.6607-4.1254a4.4708 4.4708 0 0 1-.5346-3.0137l.142.0852 4.783 2.7582a.7712.7712 0 0 0 .7806 0l5.8428-3.3685v2.3324a.0804.0804 0 0 1-.0332.0615L9.74 19.9502a4.4992 4.4992 0 0 1-6.1408-1.6464zM2.3408 7.8956a4.485 4.485 0 0 1 2.3655-1.9728V11.6a.7664.7664 0 0 0 .3879.6765l5.8144 3.3543-2.0201 1.1685a.0757.0757 0 0 1-.071 0l-4.8303-2.7865A4.504 4.504 0 0 1 2.3408 7.872zm16.5963 3.8558L13.1038 8.364 15.1192 7.2a.0757.0757 0 0 1 .071 0l4.8303 2.7913a4.4944 4.4944 0 0 1-.6765 8.1042v-5.6772a.79.79 0 0 0-.407-.667zm2.0107-3.0231l-.142-.0852-4.7735-2.7818a.7759.7759 0 0 0-.7854 0L9.409 9.2297V6.8974a.0662.0662 0 0 1 .0284-.0615l4.8303-2.7866a4.4992 4.4992 0 0 1 6.6802 4.66zM8.3065 12.863l-2.02-1.1638a.0804.0804 0 0 1-.038-.0567V6.0742a4.4992 4.4992 0 0 1 7.3757-3.4537l-.142.0805L8.704 5.459a.7948.7948 0 0 0-.3927.6813zm1.0976-2.3654l2.602-1.4998 2.6069 1.4998v2.9994l-2.5974 1.4997-2.6067-1.4997Z" /></svg>
);

const CopilotLogo = ({ size, id }) => (
  <svg width={size} height={size} viewBox="0 0 30 30">
    <defs>
      <linearGradient id={id + 'a'} x1=".4" y1="0" x2=".2" y2="1"><stop offset="0" stopColor="#1292f0" /><stop offset=".45" stopColor="#1a86d0" /><stop offset=".7" stopColor="#5bb56a" /><stop offset="1" stopColor="#f5d000" /></linearGradient>
      <linearGradient id={id + 'b'} x1=".7" y1="0" x2=".4" y2="1"><stop offset="0" stopColor="#a24df0" /><stop offset=".5" stopColor="#ee5292" /><stop offset="1" stopColor="#ff9a4d" /></linearGradient>
    </defs>
    <path d="M12 27.500 16.500 11c.8-2.600 2-3.800 4.300-3.800h4.500c4 0 5 3 4 6.300l-2.300 8.300c-1 3.500-2.700 6.200-6.500 6.200h-6c-1.500 0-2.200 0-2.500-.500z" fill={`url(#${id}b)`} />
    <path d="M18.500 2.500 13.600 19c-.8 2.600-2 3.800-4.300 3.800H4.700c-4 0-5-3-4-6.300L3 8.200C4 4.700 5.700 1.500 9.500 1.500h6.500c1.500 0 2.200.3 2.500 1z" fill={`url(#${id}a)`} />
    <path d="M14.500 1.500h3.800c2 0 3 1.200 3.500 3l.8 2.900h-2.100c-2 0-3.300 1.200-4 3.600l-1.300 4z" fill="#1b4fd0" />
    <path d="M15.500 28H12c-2 0-3-1-3.500-3l-.6-2.200h1.700c2 0 3.300-1.200 4-3.800l1-3.400z" fill="#f4563c" />
    <path d="m16.200 11.200-3.400 11.600h1.500c1.500 0 2-.8 2.500-2.500l2.700-9.800c.5-1.800.9-3 2.200-3.300h-1.500c-2 0-3.200 1.200-4 4z" fill="#fff" />
  </svg>
);

const Koala = () => (
  <svg width="54" height="34" viewBox="0 0 54 34">
    <path d="M7 .5c1 5 6 8 11 12.500 8 7 14 14 29 20.500H36C25 26 18 18 11 10.500L5.500 5z" fill="#8a5036" />
    <path d="M11 8 3 6.500" stroke="#8a5036" strokeWidth="1.200" />
    <path d="M4 7c-3 2-4 6-3.700 9.500C3 14.500 5 11 4.500 7zM5.500 8c-.5 3 .2 6 1.500 8.500C8 13 7.500 10 5.500 8zM21 20c-4-2-7-1-9 .8 3 .6 6 .8 9-.8zM23 22c-4-.5-6 .5-8 3.200 3.500.3 6-.6 8-3.200z" fill="#7fab4a" />
    <path d="M31 16c9-3 19 2 21 10 .8 4-1 7-4 7.500H31c-3 0-2-3-1-4.500-2-4-1-10 1-13z" fill="#8a93a6" />
    <path d="M43 17c6 2 9 7 9 12-2 4-7 4-9 1-2-4 2-7 0-13z" fill="#717b90" />
    <path d="M31 21c2 3 3 7 2 12.500h-4c0-4 0-8 2-12.500z" fill="#c4cad4" />
    <circle cx="20.500" cy="6.200" r="4.600" fill="#8a93a6" /><circle cx="41" cy="6.800" r="5" fill="#8a93a6" />
    <circle cx="21" cy="6.600" r="2.600" fill="#d7d3d8" /><circle cx="40.500" cy="7.400" r="3" fill="#d7d3d8" />
    <ellipse cx="30.500" cy="11.500" rx="9.600" ry="8.600" fill="#9ba4b5" />
    <ellipse cx="30" cy="17" rx="5" ry="3" fill="#d4d8df" />
    <ellipse cx="30" cy="14" rx="2.300" ry="3.500" fill="#2f3440" />
    <circle cx="25.300" cy="12" r="1.200" fill="#23262e" /><circle cx="35.300" cy="12.200" r="1.200" fill="#23262e" />
    <path d="M24 20.500c3 1 6 3 8 6M38 29c3-1 6-.5 9 2" stroke="#656f84" strokeWidth="1.500" fill="none" />
    <path d="M36 33.500c2-3 6-4 9-1.500l2 1.500z" fill="#a4583a" />
  </svg>
);

const WeatherIcon = () => (
  <svg width="32" height="40" viewBox="0 0 32 40">
    <defs><linearGradient id="cl" x1="0" y1="0" x2="0" y2="1"><stop offset="0" stopColor="#8fb2ee" /><stop offset="1" stopColor="#c3cdf0" /></linearGradient></defs>
    <path d="M7 31a6.300 6.300 0 0 1-.6-12.500A9 9 0 0 1 23 16.500a7.300 7.300 0 0 1 1.600 14.500z" fill="url(#cl)" />
    <path d="M3 20.500c3-3.500 8-2.500 10 1" stroke="#6f92dc" strokeWidth="1.200" fill="none" opacity=".7" />
    <path d="M17 26c3.600 2 7.600 5 7.600 8.500a3.800 3.800 0 0 1-7.600 0z" fill="#1a7ff0" />
    <circle cx="24.500" cy="10.500" r="9.600" fill="#c42b1c" />
    <text x="24.500" y="15.500" fill="#fff" fontSize="13.500" fontWeight="600" textAnchor="middle" fontFamily="Open Sans">1</text>
  </svg>
);

const StartLogo = () => (
  <svg width="30" height="30" viewBox="0 0 30 30">
    <defs><linearGradient id="st" x1="0" y1="0" x2="1" y2="1"><stop offset="0" stopColor="#56d1fb" /><stop offset="1" stopColor="#0168cf" /></linearGradient></defs>
    <path d="M1 1h13.800v13.800H1zM15.800 1H30v13.800H15.800zM1 15.800h13.800V30H1zM15.800 15.800H30V30H15.800z" fill="url(#st)" />
  </svg>
);

const TaskView = () => (
  <svg width="30" height="30" viewBox="0 0 30 30">
    <defs><linearGradient id="tv" x1="0" y1="0" x2="0" y2="1"><stop offset="0" stopColor="#4a4a4a" /><stop offset="1" stopColor="#161616" /></linearGradient></defs>
    <rect x="0" y="9" width="23" height="20" rx="1.500" fill="url(#tv)" /><rect x="7.500" y="1.500" width="22" height="20" rx="1.500" fill="#fff" opacity=".82" /><rect x="7.500" y="9" width="15.500" height="12.500" fill="#a5a5a5" />
  </svg>
);

const M365Wrap = styled.div`
  position: relative;
  width: 30px;
  height: 30px;
`;

const M365Tag = styled.span`
  position: absolute;
  right: 0;
  bottom: 0;
  width: 21px;
  height: 9px;
  background: #111;
  border-radius: 1px;
  color: #fff;
  font-size: 7.5px;
  font-weight: 700;
  line-height: 9px;
  text-align: center;
`;

const Store = () => (
  <svg width="30" height="30" viewBox="0 0 30 30">
    <defs><linearGradient id="so" x1="0" y1="0" x2=".6" y2="1"><stop offset="0" stopColor="#0d67b5" /><stop offset="1" stopColor="#193a66" /></linearGradient></defs>
    <path d="M8 6V3.200A1.700 1.700 0 0 1 9.700 1.500h10.600A1.700 1.700 0 0 1 22 3.200V6" stroke="#35c3f2" strokeWidth="1.800" fill="none" />
    <path d="M.5 5h29v20a4.500 4.500 0 0 1-4.500 4.500H5A4.500 4.500 0 0 1 .5 25z" fill="url(#so)" />
    <path d="M9.500 12h5v5h-5z" fill="#f25022" /><path d="M15.500 12h5v5h-5z" fill="#7fba00" /><path d="M9.500 18h5v5h-5z" fill="#00a4ef" /><path d="M15.500 18h5v5h-5z" fill="#ffb900" />
  </svg>
);

const Explorer = () => (
  <svg width="30" height="30" viewBox="0 0 30 30">
    <defs><linearGradient id="ex" x1="0" y1="0" x2="1" y2="1"><stop offset="0" stopColor="#ffd95e" /><stop offset="1" stopColor="#fbb91c" /></linearGradient></defs>
    <path d="M0 4a1.500 1.500 0 0 1 1.500-1.500h9L13.500 5H29a1 1 0 0 1 1 1v4H0z" fill="#dd9a07" />
    <path d="M0 8h10.500l2.500-1.800h17V28H0z" fill="url(#ex)" />
    <path d="M5 28v-4.500A2.500 2.500 0 0 1 7.500 21h15a2.500 2.500 0 0 1 2.500 2.500V28z" fill="#1277c9" /><path d="M8.500 24.500h13" stroke="#0a4f94" strokeWidth="1.400" />
  </svg>
);

const Edge = () => (
  <svg width="30" height="30" viewBox="0 0 30 30">
    <defs>
      <linearGradient id="e1" x1="0" y1=".3" x2="1" y2=".6"><stop offset="0" stopColor="#1aa3d9" /><stop offset=".5" stopColor="#2bc3c0" /><stop offset="1" stopColor="#6be04f" /></linearGradient>
      <linearGradient id="e2" x1="0" y1="0" x2=".5" y2="1"><stop offset="0" stopColor="#1b9de0" /><stop offset="1" stopColor="#0c59a4" /></linearGradient>
    </defs>
    <path d="M.5 13C2 5 8 0 15.500 0 24 0 30 6 30 12.500c0 5-4 8-8.500 8-3.500 0-4.500-1.200-4-2.200.8-1 1.500-2.200 1-4.300C17.500 10 13 8 8.500 8.500 4.500 9 1.500 11 .5 13z" fill="url(#e1)" />
    <path d="M.2 14.500C1 9 6 7 10 7.500c5 .5 8.500 3.500 8.500 7-2-2.500-6-1.500-6.500 2-.5 5 4.500 9 9.500 8.500 3-.3 5-1.300 6-1.800C25 27.500 20 30 15 30 7 30-.6 23.500.2 14.500z" fill="url(#e2)" />
    <path d="M9 15c-1.500 6 2.500 13.500 9 14.600C23 29 26.500 26 27.600 23.500c-3 1.800-7 2.200-10 .8-3.500-1.700-5.600-5-5.600-7.800 0-1.600.6-2.800 1.500-3.500C11.500 12 9.500 13 9 15z" fill="#0f4c94" />
  </svg>
);

const Outlook = () => (
  <svg width="30" height="30" viewBox="0 0 30 30">
    <path d="M5 8.500 16 2.300c.8-.5 1.600-.5 2.400 0L30 9v15a4 4 0 0 1-4 4H9a4 4 0 0 1-4-4z" fill="#36bdf0" />
    <path d="M5 9 17 2.500 28 8 14 20H5z" fill="#1270c8" /><path d="M30 9v5L17 22l-3-3z" fill="#173f8e" /><path d="M30 14v10a4 4 0 0 1-4 4H10l8-6z" fill="#4bd1f7" />
    <rect x="0" y="7" width="16" height="16" rx="2" fill="#0f5fc0" />
    <text x="8" y="19.600" fill="#fff" fontSize="13" fontWeight="700" textAnchor="middle" fontFamily="Open Sans">O</text>
  </svg>
);

const Word = () => (
  <svg width="30" height="30" viewBox="0 0 30 30">
    <path d="M7 2.500A1.500 1.500 0 0 1 8.500 1H28a1.500 1.500 0 0 1 1.500 1.500V8H7z" fill="#41a5ee" /><path d="M7 8h22.500v7H7z" fill="#2b7cd3" /><path d="M7 15h22.500v6.800H7z" fill="#185abd" /><path d="M7 21.800h22.500v5A1.500 1.500 0 0 1 28 28.500H8.500A1.500 1.500 0 0 1 7 27z" fill="#103f91" />
    <rect x="0" y="7" width="15.500" height="15.500" rx="1.500" fill="#185abd" />
    <text x="7.700" y="19" fill="#fff" fontSize="11.500" fontWeight="700" textAnchor="middle" fontFamily="Open Sans">W</text>
  </svg>
);

const VSCode = () => (
  <svg width="30" height="30" viewBox="0 0 30 30">
    <path d="M22 .2 29 3.400c.6.300 1 .9 1 1.500v20.200c0 .6-.4 1.200-1 1.500l-7 3.200z" fill="#29a3ee" />
    <path d="M22 21.800 3.800 8.100c-.5-.4-1.100-.4-1.600 0L.4 9.800c-.5.500-.5 1.300 0 1.800L20.500 29.500c.5.500 1.200.4 1.800.1z" fill="#0f8ad8" />
    <path d="M22 8.200 3.800 21.900c-.5.400-1.100.4-1.600 0L.4 20.200c-.5-.5-.5-1.300 0-1.800L20.500.5c.5-.500 1.200-.4 1.800-.1z" fill="#0a6fb5" />
  </svg>
);

const DropTriangle = () => <Octicon name="triangle" />;

/* ---------- Data ---------- */
const REPO_TABS = [
  ['code', 'Code', 91], ['pull', 'Pull requests', 152], ['play', 'Actions', 109], ['table', 'Projects', 113],
  ['book', 'Wiki', 85], ['shield', 'Security', 114], ['graph', 'Insights', 111], ['gear', 'Settings', 115],
];

const SECTIONS = [
  { title: 'Access', rows: [['people', 'Collaborators'], ['discussion', 'Moderation options', 'menu']] },
  {
    title: 'Code and automation',
    rows: [['branch', 'Branches'], ['tag', 'Tags'], ['rules', 'Rules', 'menu'], ['play', 'Actions', 'menu'], ['models', 'Models', 'preview'],
      ['webhook', 'Webhooks'], ['copilot', 'Copilot', 'menu'], ['server', 'Environments'], ['codespaces', 'Codespaces'], ['browser', 'Pages']],
  },
  { title: 'Security', rows: [['codescan', 'Advanced Security'], ['key', 'Deploy keys']] },
];

const AudioSlot = styled.div`
  margin-left: 11px;
`;

function BrowserTab({ icon, extra, title, fade, divider, w, pad }) {
  return (
    <Tab $divider={divider} $w={w} $pad={pad}>
      <Favicon>{icon}</Favicon>
      {extra}
      <TabTitle $fade={fade}>{title}</TabTitle>
      <TabClose><CloseX /></TabClose>
    </Tab>
  );
}

export default function App() {
  return (
    <Screen>
      <Global />
      <TabStrip>
        <StripPart $side="left">
          <WorkspaceButton><WorkspaceIcon /></WorkspaceButton>
          <BrowserTab divider icon={<FabFoundation />} title="Version Control - UNIPOD Tr" fade />
          <BrowserTab divider icon={<YouTube />} extra={<AudioSlot><Speaker /></AudioSlot>} title="YouTube" />
          <BrowserTab divider icon={<WhatsApp />} title="WhatsApp" />
          <BrowserTab divider icon={<Globe />} title="UNIPOD Digital Fabrication T" fade />
        </StripPart>
        <ActiveTabWrap>
          <ActiveTab><BrowserTab icon={<Octicon name="mark" color="#1f2328" />} title="General" /></ActiveTab>
        </ActiveTabWrap>
        <StripPart $side="right">
          <BrowserTab icon={<OpenAI />} title="Sign off on commits" w={263} pad={7} />
          <StripTools>
            <svg width="17" height="17" viewBox="0 0 17 17" stroke="#1b1b1b" strokeWidth="1.500"><path d="M8.500 0v17M0 8.500h17" /></svg>
            <WindowButtons>
              <svg width="15" height="14" viewBox="0 0 15 14" stroke="#111" strokeWidth="1.300"><path d="M1 7h13" /></svg>
              <svg width="15" height="15" viewBox="0 0 15 15" fill="none" stroke="#111" strokeWidth="1.300"><rect x="1" y="3.500" width="10" height="10.500" rx="1.500" /><path d="M4 3.500V2.200A1.400 1.400 0 0 1 5.400.8h6.200A1.800 1.800 0 0 1 13.400 2.600v7.200a1.400 1.400 0 0 1-1.400 1.400h-1" /></svg>
              <CloseX size={14} w={1.1} />
            </WindowButtons>
          </StripTools>
        </StripPart>
      </TabStrip>

      <AddressRow>
        <NavIcon $gap={23}>
          <svg width="22" height="20" viewBox="0 0 22 20" fill="none" stroke="#333" strokeWidth="1.500" strokeLinecap="round" strokeLinejoin="round"><path d="M20.500 10H1.500M10 1.500 1.500 10l8.500 8.500" /></svg>
        </NavIcon>
        <NavIcon $gap={19}>
          <svg width="22" height="22" viewBox="0 0 22 22" fill="none" stroke="#333" strokeWidth="1.500" strokeLinecap="round" strokeLinejoin="round"><path d="M20.200 11a9.200 9.200 0 1 1-3.400-7.200L19.500 6M19.800 1v5.200h-5.300" /></svg>
        </NavIcon>
        <AddressBar>
          <svg width="17" height="19" viewBox="0 0 17 19" fill="none" stroke="#444" strokeWidth="1.300"><rect x="1" y="6.300" width="15" height="11.500" rx="2" /><path d="M5 6V4.300a3.500 3.500 0 0 1 7 0V6" /><circle cx="8.500" cy="12" r="1.100" fill="#444" stroke="none" /></svg>
          <Url>https://<b>github.com</b>/zmalefane377/zandilemalefane.github.io/settings</Url>
          <UrlActions>
            <svg width="22" height="22" viewBox="0 0 22 22" fill="none" stroke="#777" strokeWidth="1.300"><path d="M9.500 3.500H4A1.500 1.500 0 0 0 2.500 5v13A1.500 1.500 0 0 0 4 19.500h13a1.500 1.500 0 0 0 1.500-1.500v-5.500h-16M10.500 3.500v16M15.500 2v7M12 5.500h7" /></svg>
            <svg width="22" height="22" viewBox="0 0 22 22" fill="none" stroke="#777" strokeWidth="1.300" strokeLinecap="round"><path d="M2 19 7.800 4.500 13.500 19M4 14h7.500M13.500 4.500c1.700 1.300 2.300 3 2 5M16 1.800c3 2 4.200 5 3.500 9" /></svg>
            <svg width="22" height="22" viewBox="0 0 22 22" fill="none" stroke="#777" strokeWidth="1.300" strokeLinejoin="round"><path d="m11 1.800 2.800 6 6.600.8-4.900 4.500 1.300 6.500L11 16.400l-5.800 3.200 1.300-6.500L1.600 8.600l6.600-.8z" /></svg>
          </UrlActions>
        </AddressBar>
        <BrowserActions>
          <svg width="22" height="22" viewBox="0 0 22 22" fill="none" stroke="#222" strokeWidth="1.400" strokeLinejoin="round" strokeLinecap="round"><path d="M11.800 6.600 9.300 1.500 6.700 7.200l-5.700.9 4.200 4.300-1 6.700 4-2.500M14 8.500h6.500M12.500 12.800h8M13.500 17.200h7" /></svg>
          <svg width="28" height="28" viewBox="0 0 28 28"><defs><clipPath id="pf"><circle cx="14" cy="14" r="14" /></clipPath></defs><circle cx="14" cy="14" r="14" fill="#d2d0ce" /><g clipPath="url(#pf)" fill="#8a8886"><circle cx="14" cy="10.500" r="6" /><ellipse cx="14" cy="25" rx="9.500" ry="7" /></g><circle cx="24.500" cy="4" r="4.800" fill="#f7f7f7" /><circle cx="24.500" cy="4" r="3.600" fill="#e60000" /></svg>
          <svg width="18" height="4" viewBox="0 0 18 4" fill="#222"><circle cx="2" cy="2" r="1.500" /><circle cx="9" cy="2" r="1.500" /><circle cx="16" cy="2" r="1.500" /></svg>
          <CopilotLogo size={28} id="cp" />
        </BrowserActions>
      </AddressRow>

      <PageFrame>
        <Page>
          <Header>
            <TopBar>
              <IconButton><Octicon name="bars" /></IconButton>
              <Logo><Octicon name="mark" size={37} color="#1f2328" /></Logo>
              <Crumbs>zmalefane377<span>/</span><b>zandilemalefane.github.io</b></Crumbs>
              <SearchBox><Octicon name="search" />Type<Kbd>/</Kbd>to search</SearchBox>
              <SplitButton>
                <SplitHalf $w={40} $line><Octicon name="copilot" /></SplitHalf>
                <SplitHalf $w={28}><DropTriangle /></SplitHalf>
              </SplitButton>
              <VLine />
              <HeaderButtons>
                <IconButton $w={62}><Octicon name="plus" /><DropTriangle /></IconButton>
                <IconButton><Octicon name="issue" /></IconButton>
                <IconButton><Octicon name="pull" /></IconButton>
                <IconButton><Octicon name="inbox" /><UnreadDot /></IconButton>
                <Avatar>
                  <svg width="40" height="40" viewBox="0 0 40 40" fill="#82b6d6"><path d="M16.500 10h6.500v6.500h6.500V23H10v-6.500h6.500zM3 29.500h7V36H3zM16.500 29.500H23V36h-6.500zM29.500 29.500h7V36h-7z" /></svg>
                </Avatar>
              </HeaderButtons>
            </TopBar>
            <RepoNav>
              {REPO_TABS.map(([icon, label, w]) => (
                <RepoTab key={label} $w={w} $active={label === 'Settings'}><Octicon name={icon} />{label}</RepoTab>
              ))}
            </RepoNav>
          </Header>
          <Settings>
            <Sidebar>
              <NavRow $active><Octicon name="gear" /><NavLabel>General</NavLabel></NavRow>
              {SECTIONS.map((s) => (
                <React.Fragment key={s.title}>
                  <NavHeading>{s.title}</NavHeading>
                  {s.rows.map(([icon, label, end]) => (
                    <NavRow key={label}>
                      <Octicon name={icon} />
                      <NavLabel $lift>{label}</NavLabel>
                      {end === 'menu' && <Octicon name="chevron" />}
                      {end === 'preview' && <Badge>Preview</Badge>}
                    </NavRow>
                  ))}
                </React.Fragment>
              ))}
            </Sidebar>
            <Main>
              <Title $ls={-0.25}>General</Title>
              <FieldLabel>Repository name</FieldLabel>
              <FieldRow $gap={6}>
                <Field $h={39}>zandilemalefane.github.io</Field>
                <Button>Rename</Button>
              </FieldRow>
              <Option $mt={20}>
                <CheckBox />
                <div>
                  <OptionTitle $ls={-0.2}>Template repository</OptionTitle>
                  <OptionNote $ls={-0.065}>Template repositories let users generate new repositories with the same directory structure and files. <Link>Learn more about template repositories</Link>.</OptionNote>
                </div>
              </Option>
              <Option $mt={20.5}>
                <CheckBox />
                <div>
                  <OptionTitle $ls={-0.02}>Require contributors to sign off on web-based commits</OptionTitle>
                  <OptionNote $ls={0.045}>
                    Enabling this setting will require contributors to sign off on commits made through GitHub’s web interface. Signing off is a way for<br />
                    <Tight $ls={0.005}>contributors to affirm that their commit complies with the repository's terms, commonly the <Link>Developer Certificate of Origin (DCO)</Link>. </Tight><Link>Learn<br />
                    more about signing off on commits</Link>.
                  </OptionNote>
                </div>
              </Option>
              <Title $mt={38.5} $ls={-0.05}>Default branch</Title>
              <Paragraph>
                The default branch is considered the “base” branch in your repository, against which all pull requests and code commits are<br />
                <Tight $ls={-0.07}>automatically made, unless you specify a different branch.</Tight>
              </Paragraph>
              <FieldRow $gap={5}>
                <Field $h={42}><BranchName>main</BranchName></Field>
                <IconButton><Octicon name="pencil" /></IconButton>
              </FieldRow>
              <Title $mt={50} $ls={-0.4}>Releases</Title>
              <Option $mt={21}>
                <CheckBox />
                <div>
                  <OptionTitle $ls={-0.16}>Enable release immutability</OptionTitle>
                  <OptionNote $ls={0.01}>Disallow assets and tags from being modified once a release is published.</OptionNote>
                </div>
              </Option>
            </Main>
          </Settings>
        </Page>
        <Scrollbar>
          <svg width="13" height="10" viewBox="0 0 13 10" fill="#858585"><path d="M6.500.5 12.700 9a.6.600 0 0 1-.5 1H.8a.6.600 0 0 1-.5-1z" /></svg>
          <Thumb />
          <svg width="13" height="10" viewBox="0 0 13 10" fill="#858585"><path d="M6.500 9.500.3 1A.6.600 0 0 1 .8 0h11.400a.6.600 0 0 1 .5 1z" /></svg>
        </Scrollbar>
      </PageFrame>

      <Taskbar>
        <Weather>
          <WeatherIcon />
          <TwoLines $ls={0.03} $sub="#52605e">17°C<small>Light rain</small></TwoLines>
        </Weather>
        <StartButton><StartLogo /></StartButton>
        <TaskSearch>
          <svg width="19" height="19" viewBox="0 0 19 19" fill="none" stroke="#222" strokeWidth="2"><circle cx="8" cy="8" r="6.800" /><path d="m13 13 5 5" strokeWidth="2.400" /></svg>
          <span>Search</span>
          <Koala />
        </TaskSearch>
        <Apps>
          <AppCell><TaskView /></AppCell>
          <AppCell><M365Wrap><CopilotLogo size={30} id="m3" /><M365Tag>M365</M365Tag></M365Wrap></AppCell>
          <AppCell><Store /></AppCell>
          <AppCell $open><Explorer /></AppCell>
          <AppCell $active><Edge /></AppCell>
          <AppCell><Outlook /></AppCell>
          <AppCell $open><Word /></AppCell>
          <AppCell $open><VSCode /></AppCell>
        </Apps>
        <Tray>
          <TrayIcon $w={40}><svg width="14" height="8" viewBox="0 0 14 8" fill="none" stroke="#1b1b1b" strokeWidth="1.600"><path d="m1 7 6-6 6 6" /></svg></TrayIcon>
          <TrayIcon $w={41}><svg width="21" height="17" viewBox="0 0 21 17" fill="none" stroke="#1b1b1b" strokeWidth="1.400"><path d="M5.500 14.500a4.500 4.500 0 0 1-.6-9A6 6 0 0 1 16 5.800a4.400 4.400 0 0 1-.2 8.700z" fill="#aeb3b2" /><path d="m3 .8 15.500 15.500" /></svg></TrayIcon>
          <TrayIcon $w={37}><svg width="20" height="15" viewBox="0 0 20 15" fill="none" stroke="#1b1b1b" strokeWidth="1.400" strokeLinecap="round"><path d="M1 5.500a12.700 12.700 0 0 1 18 0M3.800 8.300a8.800 8.800 0 0 1 12.400 0M6.600 11a4.800 4.800 0 0 1 6.800 0" /><circle cx="10" cy="13" r="1.400" fill="#1b1b1b" stroke="none" /></svg></TrayIcon>
          <TrayIcon $w={24}><svg width="20" height="17" viewBox="0 0 21 18" fill="none" stroke="#1b1b1b" strokeWidth="1.400" strokeLinejoin="round"><path d="M1 6h3l4.500-4.300v14.600L4 12H1z" /><path d="M11.500 6a4.500 4.500 0 0 1 0 6" /><path d="M14 3.700a8 8 0 0 1 0 10.600M17 1.500a11.500 11.500 0 0 1 0 15" opacity=".3" /></svg></TrayIcon>
          <TrayIcon $w={36}><svg width="20" height="13" viewBox="0 0 20 13" fill="none" stroke="#1b1b1b" strokeWidth="1.400"><rect x=".8" y=".8" width="15.900" height="11.400" rx="2.500" /><path d="M3 3h8v7H3z" fill="#1b1b1b" stroke="none" /><path d="M18.500 4.500v4" strokeWidth="2.200" /></svg></TrayIcon>
          <ClockBox><TwoLines $align="right" $ls={0.06}>1:07:05 am<small>30/09/2025</small></TwoLines></ClockBox>
        </Tray>
      </Taskbar>
    </Screen>
  );
}
